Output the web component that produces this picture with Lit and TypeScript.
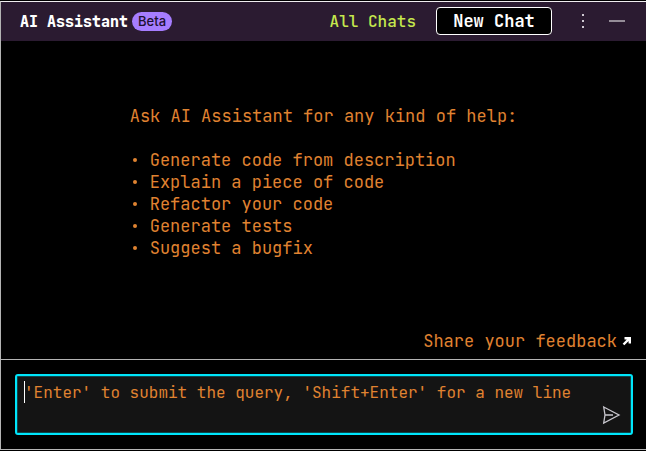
import { LitElement, html, css } from "lit";
import { customElement } from "lit/decorators.js";

const SUGGESTIONS = [
  "Generate code from description",
  "Explain a piece of code",
  "Refactor your code",
  "Generate tests",
  "Suggest a bugfix",
];

@customElement("assistant-header")
class AssistantHeader extends LitElement {
  static styles = css`
    :host {
      display: flex;
      align-items: center;
      padding: 5px 20px 6px 19px;
      background: #2b1b31;
    }
    h1 {
      margin: 0;
      padding-top: 2px;
      font-size: 15px;
      line-height: 22px;
      font-weight: 800;
      color: #fff;
      white-space: nowrap;
    }
    .badge {
      margin-left: 4px;
      padding: 0 6px;
      border-radius: 10px;
      background: #a67dff;
      color: #1d1030;
      font: 500 13px/19px Inter, sans-serif;
    }
    .actions {
      display: flex;
      align-items: center;
      margin-left: auto;
    }
    button {
      padding: 0;
      border: 0;
      background: none;
      font-family: inherit;
      font-size: 16px;
      line-height: 22px;
      color: #c5e84d;
      white-space: nowrap;
    }
    .all {
      padding-top: 2px;
      font-weight: 500;
    }
    .new {
      box-sizing: border-box;
      width: 116px;
      height: 28px;
      margin-left: 20px;
      border: 1px solid #fff;
      border-radius: 4px;
      background: #000;
      color: #fff;
      font-size: 17px;
      font-weight: 600;
    }
    .icon {
      display: flex;
      width: 18px;
      height: 18px;
    }
    .more {
      margin-left: 22px;
    }
    .hide {
      margin-left: 16px;
    }
  `;

  render() {
    return html`
      <h1>AI Assistant</h1>
      <span class="badge">Beta</span>
      <div class="actions">
        <button class="all">All Chats</button>
        <button class="new">New Chat</button>
        <button class="icon more" aria-label="More options">
          <svg width="18" height="18" viewBox="0 0 18 18" fill="#d0cad3">
            <rect x="8" y="2" width="2" height="2" />
            <rect x="8" y="8" width="2" height="2" />
            <rect x="8" y="14" width="2" height="2" />
          </svg>
        </button>
        <button class="icon hide" aria-label="Hide">
          <svg width="18" height="18" viewBox="0 0 18 18" fill="#958d98">
            <rect x="1" y="8" width="16" height="2" />
          </svg>
        </button>
      </div>
    `;
  }
}

@customElement("assistant-prompt")
class AssistantPrompt extends LitElement {
  static styles = css`
    :host {
      display: block;
      padding: 14px 13px 14px 14px;
      border-top: 1px solid #b4b4b4;
    }
    .box {
      position: relative;
      display: flex;
      border: 2px solid #00e5fa;
      border-radius: 3px;
      background: #141414;
      box-shadow: inset 0 0 0 1px #0c4549;
    }
    textarea {
      box-sizing: border-box;
      flex: 1;
      min-width: 0;
      height: 57px;
      padding: 6px 7px;
      border: 0;
      outline: 0;
      resize: none;
      overflow: hidden;
      background: none;
      color: #e08331;
      font: inherit;
      font-size: 16px;
    }
    textarea::placeholder {
      color: #e08331;
      opacity: 1;
    }
    .caret {
      position: absolute;
      left: 7px;
      top: 5px;
      width: 1px;
      height: 22px;
      background: #fff;
    }
    button {
      position: absolute;
      right: 10px;
      bottom: 8px;
      display: flex;
      padding: 0;
      border: 0;
      background: none;
    }
  `;

  render() {
    return html`
      <div class="box">
        <textarea
          aria-label="Query"
          placeholder="'Enter' to submit the query, 'Shift+Enter' for a new line"
        ></textarea>
        <span class="caret"></span>
        <button aria-label="Send">
          <svg width="20" height="20" viewBox="0 0 20 20" fill="none" stroke="#c9c7ce" stroke-width="1.3" stroke-linejoin="miter">
            <path d="M2.7 2 L18 10 L2.7 18 L4 10 Z M4 10 H12" />
          </svg>
        </button>
      </div>
    `;
  }
}

@customElement("app-root")
class AppRoot extends LitElement {
  static styles = css`
    :host {
      display: flex;
      flex-direction: column;
      box-sizing: border-box;
      min-height: 100vh;
      padding: 1px 0;
      background: #000;
      color: #e08331;
      font-family: "JetBrains Mono", "DejaVu Sans Mono", monospace;
      font-size: 17px;
      line-height: 22px;
    }
    .panel {
      flex: 1;
      display: flex;
      flex-direction: column;
      border: solid #b4b4b4;
      border-width: 1px 0 1px 1px;
      border-top-color: #f0eef0;
    }
    main {
      flex: 1;
      display: flex;
      flex-direction: column;
      align-items: center;
      padding: 64px 14px 7px;
    }
    p {
      margin: 0 0 22px;
    }
    ul {
      margin: 0;
      padding: 0;
      list-style: none;
    }
    li {
      display: flex;
      align-items: center;
    }
    li::before {
      content: "";
      width: 4px;
      height: 4px;
      margin: 0 13px 0 3px;
      border-radius: 50%;
      background: currentColor;
    }
    a {
      display: flex;
      align-items: center;
      gap: 5px;
      margin-top: auto;
      align-self: flex-end;
      color: inherit;
      text-decoration: none;
    }
  `;

  render() {
    return html`
      <div class="panel">
        <assistant-header></assistant-header>
        <main>
          <div>
            <p>Ask AI Assistant for any kind of help:</p>
            <ul>
              ${SUGGESTIONS.map((text) => html`<li>${text}</li>`)}
            </ul>
          </div>
          <a href="#feedback">
            Share your feedback
            <svg width="10" height="10" viewBox="0 0 10 10" fill="none" stroke="#fff" stroke-width="2.4">
              <path d="M2.5 2.2 H7.8 V7.5 M7.8 2.2 L1.5 8.5" />
            </svg>
          </a>
        </main>
        <assistant-prompt></assistant-prompt>
      </div>
    `;
  }
}
